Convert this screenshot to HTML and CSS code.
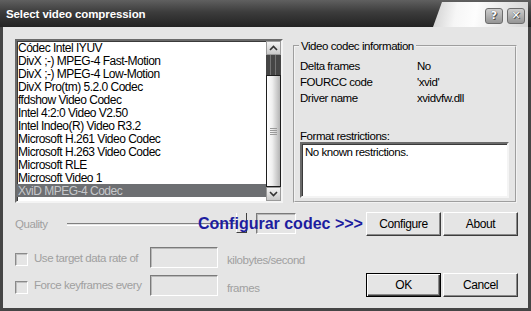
FILE: index.html
```html
<!DOCTYPE html>
<html lang="en">

<head>
  <meta charset="utf-8">
  <title>Select video compression</title>
  <link rel="stylesheet" href="styles.css">
</head>

<body>
  <div class="window">
    <div class="titlebar">
      <span class="title">Select video compression</span>
      <div class="caption">
        <button class="cap-btn">?</button>
        <button class="cap-btn">&#x2715;</button>
      </div>
    </div>
    <div class="content">
      <div class="top">
        <div class="listbox">
          <ul class="items">
            <li>Códec Intel IYUV</li>
            <li>DivX ;-) MPEG-4 Fast-Motion</li>
            <li>DivX ;-) MPEG-4 Low-Motion</li>
            <li>DivX Pro(tm) 5.2.0 Codec</li>
            <li>ffdshow Video Codec</li>
            <li>Intel 4:2:0 Video V2.50</li>
            <li>Intel Indeo(R) Video R3.2</li>
            <li>Microsoft H.261 Video Codec</li>
            <li>Microsoft H.263 Video Codec</li>
            <li>Microsoft RLE</li>
            <li>Microsoft Video 1</li>
            <li class="selected">XviD MPEG-4 Codec</li>
          </ul>
          <div class="scrollbar">
            <div class="sb-btn">
              <svg width="9" height="6" viewBox="0 0 9 6"><path d="M1 5 L4.5 1.5 L8 5" fill="none" stroke="#333" stroke-width="1.6"/></svg>
            </div>
            <div class="sb-track"></div>
            <div class="sb-thumb"><span class="grip"></span></div>
            <div class="sb-btn">
              <svg width="9" height="6" viewBox="0 0 9 6"><path d="M1 1 L4.5 4.5 L8 1" fill="none" stroke="#333" stroke-width="1.6"/></svg>
            </div>
          </div>
        </div>
        <fieldset class="info">
          <legend>Video codec information</legend>
          <div class="info-grid">
            <span>Delta frames</span><span>No</span>
            <span>FOURCC code</span><span>'xvid'</span>
            <span>Driver name</span><span>xvidvfw.dll</span>
          </div>
          <div class="fmt-label">Format restrictions:</div>
          <div class="fmt-box">No known restrictions.</div>
        </fieldset>
      </div>

      <div class="row quality-row">
        <span class="disabled quality">Quality</span>
        <div class="slider">
          <div class="groove"></div>
          <div class="thumb"></div>
        </div>
        <div class="edit small"></div>
        <span class="overlay">Configurar codec &gt;&gt;&gt;</span>
        <div class="buttons">
          <button class="btn">Configure</button>
          <button class="btn">About</button>
        </div>
      </div>

      <div class="row check-row">
        <span class="check"></span>
        <span class="disabled clabel">Use target data rate of</span>
        <div class="edit"></div>
        <span class="disabled unit">kilobytes/second</span>
      </div>

      <div class="row check-row last">
        <span class="check"></span>
        <span class="disabled clabel">Force keyframes every</span>
        <div class="edit"></div>
        <span class="disabled unit">frames</span>
        <div class="buttons">
          <button class="btn default">OK</button>
          <button class="btn">Cancel</button>
        </div>
      </div>
    </div>
  </div>
</body>

</html>
```

FILE: styles.css
```css
body {
  margin: 0;
  background: #e5e5e5;
  font-family: "Liberation Sans", Arial, sans-serif;
  font-size: 11.5px;
  letter-spacing: -0.45px;
  color: #000;
}

.window {
  width: 531px;
  height: 311px;
  box-sizing: border-box;
  display: flex;
  flex-direction: column;
  background: #e5e5e5;
  border: 3px solid #454545;
  border-top: none;
}

/* title bar */
.titlebar {
  height: 27px;
  margin: 0 -3px;
  display: flex;
  align-items: stretch;
  background: linear-gradient(#606060, #3c3c3c 45%, #232323);
}

.title {
  flex: 1;
  padding: 8px 0 0 6px;
  color: #fff;
  font-weight: bold;
  font-size: 11.5px;
  letter-spacing: -0.1px;
}

.caption {
  width: 92px;
  margin: 2px 3px 0 0;
  display: flex;
  align-items: center;
  justify-content: flex-end;
  gap: 4px;
  padding-right: 3px;
  clip-path: polygon(9px 0, 100% 0, 100% 100%, 0 100%);
  background: linear-gradient(100deg, #cfcfcf 0%, #f6f6f6 25%, #fdfdfd 45%, #d4d4d4 100%);
}

.cap-btn {
  width: 18px;
  height: 16px;
  margin-top: 2px;
  padding: 0;
  border: 1px solid #6c6c6c;
  border-radius: 3px;
  background: linear-gradient(#cdcdcd, #959595);
  color: #fff;
  font-family: "DejaVu Sans", sans-serif;
  font-weight: bold;
  font-size: 11px;
  letter-spacing: 0;
  line-height: 14px;
  text-shadow: 0 0 1px #333, 1px 1px 0 #555;
}

/* dialog body */
.content {
  flex: 1;
  padding: 12px 11px 0 12px;
  display: flex;
  flex-direction: column;
  position: relative;
}

.top {
  display: flex;
  gap: 10px;
  height: 164px;
}

.listbox {
  width: 268px;
  box-sizing: border-box;
  display: flex;
  background: #fff;
  border: 2px solid;
  border-color: #6a6a6a #f4f4f4 #f4f4f4 #6a6a6a;
  box-shadow: inset 1px 1px #3a3a3a;
}

.items {
  flex: 1;
  margin: 0;
  padding: 0;
  list-style: none;
  font-size: 12px;
  letter-spacing: -0.5px;
}

.items li {
  height: 12px;
  padding: 1px 0 0 1px;
  line-height: 13px;
  white-space: nowrap;
}

.items li.selected {
  background: #6d6f72;
  color: #c6c8cb;
}

.scrollbar {
  width: 15px;
  display: flex;
  flex-direction: column;
  background: #d8d8d8;
}

.sb-btn {
  height: 14px;
  display: flex;
  align-items: center;
  justify-content: center;
  box-sizing: border-box;
  border: 1px solid #9a9a9a;
  background: linear-gradient(#f4f4f4, #c8c8c8);
}

.sb-track {
  height: 20px;
  background: linear-gradient(90deg, #454545 0 4px, #737373 4px 5px, #454545 5px 9px, #737373 9px 10px, #454545 10px);
}

.sb-thumb {
  flex: 1;
  box-sizing: border-box;
  border: 1px solid #1e1e1e;
  display: flex;
  align-items: center;
  justify-content: center;
  background: linear-gradient(90deg, #ffffff, #f0f0f0 40%, #b4b4b4);
}

.grip {
  width: 7px;
  height: 7px;
  background: repeating-linear-gradient(#9a9a9a 0 1px, transparent 1px 2px);
}

.info {
  width: 224px;
  box-sizing: border-box;
  margin: 0;
  padding: 0 6px 3px 5px;
  min-width: 0;
  border: 2px groove #f2f2f2;
  display: flex;
  flex-direction: column;
}

.info legend {
  padding: 0 2px;
  margin-left: -1px;
  line-height: 14px;
}

.info-grid {
  margin-top: 5px;
  display: grid;
  grid-template-columns: 117px 1fr;
  grid-auto-rows: 16px;
  line-height: 16px;
}

.fmt-label {
  margin-top: 24px;
  line-height: 12px;
}

.fmt-box {
  height: 56px;
  box-sizing: border-box;
  padding: 1px 3px;
  line-height: 14px;
  background: #fff;
  border: 2px solid;
  border-color: #6a6a6a #f4f4f4 #f4f4f4 #6a6a6a;
  box-shadow: inset 1px 1px #3a3a3a;
}

/* bottom controls */
.row {
  display: flex;
  align-items: center;
  margin-right: -1px;
  white-space: nowrap;
}

.disabled {
  color: #a0a0a0;
}

.quality-row {
  height: 24px;
  margin-top: 9px;
  position: relative;
}

.quality {
  width: 52px;
}

.slider {
  width: 180px;
  height: 22px;
  display: flex;
  align-items: center;
  position: relative;
}

.groove {
  flex: 1;
  height: 1px;
  border-top: 1px solid #808080;
  border-bottom: 1px solid #fff;
}

.thumb {
  position: absolute;
  right: 0;
  top: 0;
  width: 11px;
  height: 20px;
  box-sizing: border-box;
  border-left: 1px solid #fff;
  border-right: 1px solid #404040;
  border-bottom: 1px solid #404040;
  background: #e5e5e5;
}

.edit {
  width: 68px;
  height: 21px;
  box-sizing: border-box;
  border: 1px solid;
  border-color: #7a7a7a #fff #fff #7a7a7a;
  box-shadow: inset 1px 1px #b8b8b8;
}

.edit.small {
  width: 40px;
  margin: 0 0 2px 9px;
}

.overlay {
  position: absolute;
  left: 183px;
  top: 3px;
  color: #1d1d9f;
  font-weight: bold;
  font-size: 16px;
  letter-spacing: 0;
  line-height: 18px;
}

.buttons {
  margin-left: auto;
  display: flex;
  gap: 2px;
}

.btn {
  width: 75px;
  height: 24px;
  padding: 0;
  font: inherit;
  font-size: 12px;
  letter-spacing: -0.4px;
  color: #000;
  background: #e5e5e5;
  border: 1px solid;
  border-color: #fff #3c3c3c #3c3c3c #fff;
  box-shadow: inset -1px -1px #8a8a8a;
}

.btn.default {
  border-color: #000;
  box-shadow: inset 1px 1px #fff, inset -1px -1px #3c3c3c, inset -2px -2px #8a8a8a;
}

.check-row {
  height: 21px;
  margin-top: 11px;
}

.check-row.last {
  height: 24px;
  margin-top: 5px;
}

.check {
  width: 13px;
  height: 13px;
  box-sizing: border-box;
  margin: 4px 6px 0 0;
  border: 1px solid;
  border-color: #8a8a8a #fff #fff #8a8a8a;
  box-shadow: inset 1px 1px #c0c0c0;
}

.clabel {
  width: 116px;
}

.unit {
  margin: 5px 0 0 9px;
}
```
